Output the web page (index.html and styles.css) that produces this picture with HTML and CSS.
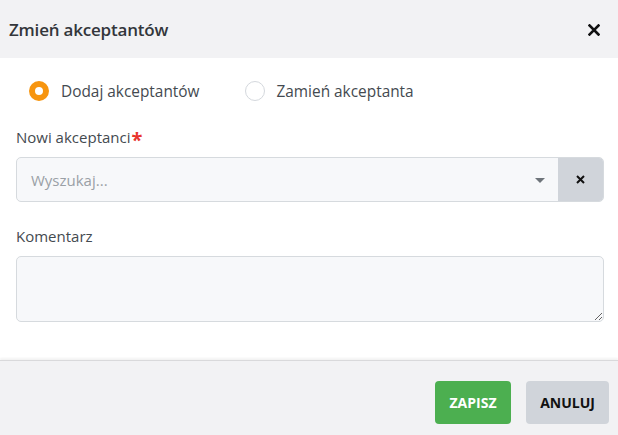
FILE: index.html
```html
<!DOCTYPE html>
<html lang="pl">
<head>
<meta charset="utf-8">
<title>Zmień akceptantów</title>
<link rel="stylesheet" href="styles.css">
</head>
<body>
<div class="modal">
  <header class="modal-header">
    <h1 class="modal-title">Zmień akceptantów</h1>
    <button class="close-btn" aria-label="Zamknij">
      <svg width="12" height="12" viewBox="0 0 12 12"><path d="M1.5 1.5L10.5 10.5M10.5 1.5L1.5 10.5" stroke="#111" stroke-width="2.6" stroke-linecap="square"/></svg>
    </button>
  </header>
  <main class="modal-body">
    <div class="radio-row">
      <label class="radio-item"><span class="radio checked"></span><span>Dodaj akceptantów</span></label>
      <label class="radio-item"><span class="radio"></span><span>Zamień akceptanta</span></label>
    </div>
    <div class="field-label">Nowi akceptanci<span class="req">*</span></div>
    <div class="select">
      <div class="select-input">
        <span class="placeholder">Wyszukaj...</span>
        <span class="caret"></span>
      </div>
      <button class="select-clear" aria-label="Wyczyść">
        <svg width="9" height="9" viewBox="0 0 9 9"><path d="M1 1L8 8M8 1L1 8" stroke="#111" stroke-width="2"/></svg>
      </button>
    </div>
    <div class="field-label second">Komentarz</div>
    <textarea class="textarea"></textarea>
  </main>
  <footer class="modal-footer">
    <button class="btn btn-save">ZAPISZ</button>
    <button class="btn btn-cancel">ANULUJ</button>
  </footer>
</div>
</body>
</html>
```

FILE: styles.css
```css
* { box-sizing: border-box; }
html, body {
  margin: 0;
  padding: 0;
  background: #fff;
  font-family: "Open Sans", "Noto Sans", sans-serif;
  color: #495057;
}
.modal {
  width: 618px;
  height: 435px;
  display: flex;
  flex-direction: column;
}
.modal-header {
  height: 58px;
  background: #f2f2f4;
  display: flex;
  align-items: center;
  justify-content: space-between;
  padding: 0 18px 0 9px;
}
.modal-title {
  margin: 0;
  font-size: 17px;
  font-weight: 600;
  color: #33363b;
  letter-spacing: -0.2px;
}
.close-btn {
  border: 0;
  background: transparent;
  padding: 0;
  width: 12px;
  height: 12px;
  display: flex;
  margin-top: 2px;
}
.modal-body {
  flex: 1;
  padding: 23px 14px 0 16px;
}
.radio-row {
  display: flex;
  gap: 45px;
  padding-left: 13px;
  height: 20px;
  align-items: center;
}
.radio-item {
  display: flex;
  align-items: center;
  gap: 12px;
  font-size: 15.4px;
  color: #444a50;
}
.radio {
  width: 20px;
  height: 20px;
  border-radius: 50%;
  border: 1px solid #d4d8dd;
  background: #fff;
  flex: none;
}
.radio.checked {
  border: 6px solid #f7950f;
}
.field-label {
  margin-top: 26px;
  height: 20px;
  line-height: 20px;
  font-size: 15px;
  color: #444a50;
  display: flex;
  align-items: center;
}
.field-label.second { margin-top: 24px; }
.req {
  color: #e8352d;
  font-weight: 700;
  font-size: 20px;
  line-height: 20px;
  margin-left: 1px;
  padding-top: 5px;
}
.select {
  margin-top: 10px;
  height: 45px;
  display: flex;
  border: 1px solid #d6dade;
  border-radius: 5px;
  overflow: hidden;
  background: #f7f8fa;
}
.select-input {
  flex: 1;
  display: flex;
  align-items: center;
  justify-content: space-between;
  padding: 0 13px 0 14px;
}
.placeholder {
  font-size: 15px;
  color: #9aa0a6;
}
.caret {
  width: 0;
  height: 0;
  border-left: 5px solid transparent;
  border-right: 5px solid transparent;
  border-top: 5px solid #6e747a;
  margin-top: 1px;
}
.select-clear {
  width: 45px;
  border: 0;
  background: #d0d4da;
  display: flex;
  align-items: center;
  justify-content: center;
  padding: 0;
}
.textarea {
  display: block;
  margin-top: 10px;
  width: 100%;
  height: 66px;
  border: 1px solid #d6dade;
  border-radius: 5px;
  background: #f7f8fa;
  resize: vertical;
  font-family: inherit;
}
.modal-footer {
  height: 75px;
  background: #f2f2f4;
  border-top: 1px solid #d9d9db;
  box-shadow: 0 -2px 2px rgba(0, 0, 0, 0.05);
  display: flex;
  justify-content: flex-end;
  align-items: flex-start;
  gap: 15px;
  padding: 20px 9px 0 0;
}
.btn {
  height: 43px;
  border: 0;
  border-radius: 4px;
  font-family: inherit;
  font-size: 14px;
  font-weight: 700;
  padding: 0 13px;
}
.btn-save {
  width: 76px;
  background: #4caf50;
  color: #fff;
}
.btn-cancel {
  width: 83px;
  background: #d0d4da;
  color: #111;
}
```
